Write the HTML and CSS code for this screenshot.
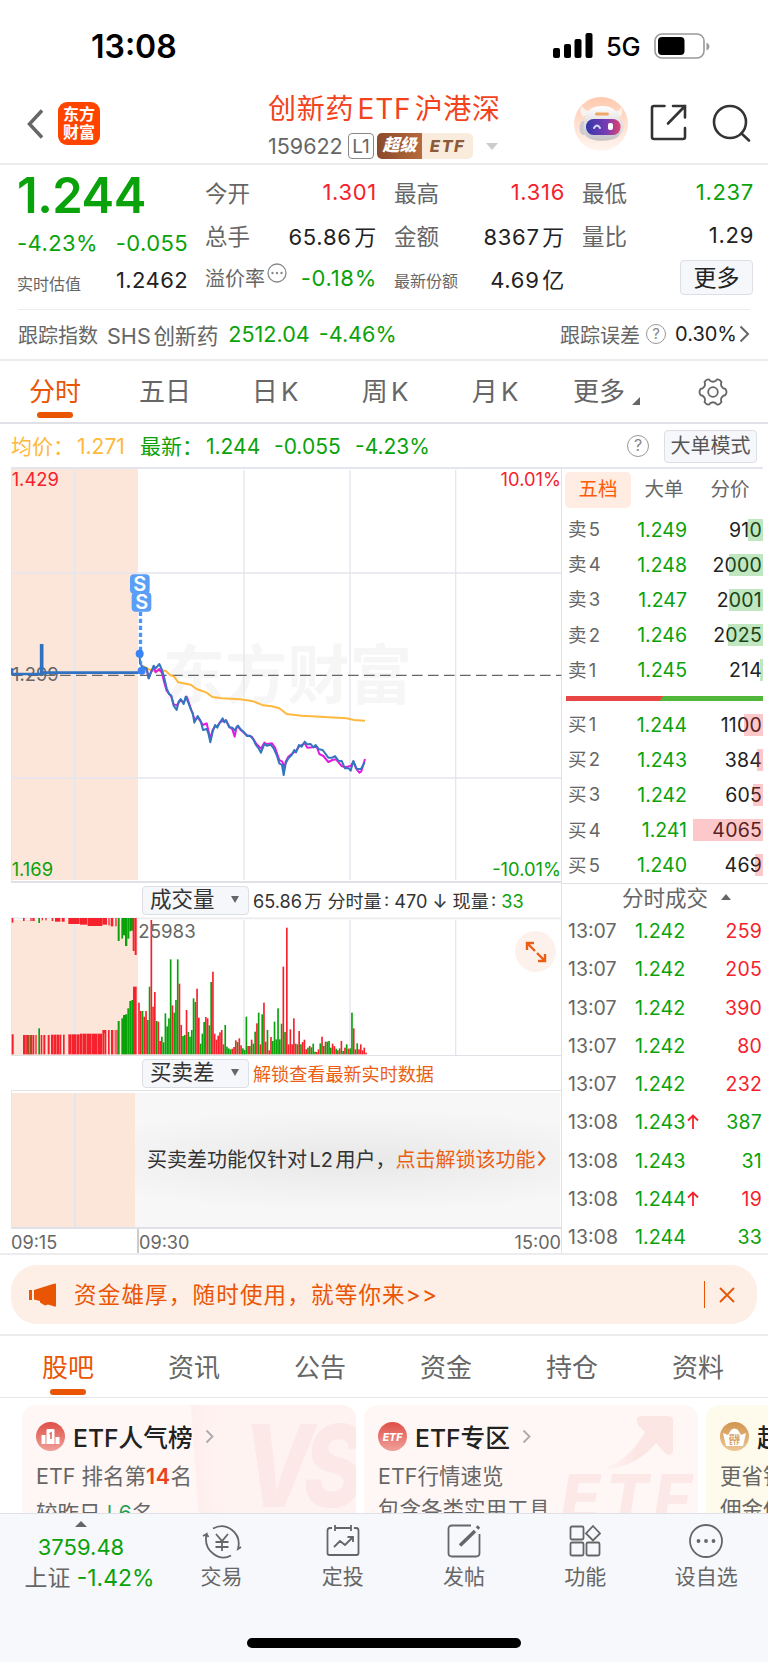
FILE: index.html
```html
<!DOCTYPE html>
<html lang="zh-CN">
<head>
  <meta charset="UTF-8" />
  <meta name="viewport" content="width=device-width, initial-scale=1.0" />
  <title>创新药ETF沪港深 159622</title>
  <link rel="stylesheet" href="styles.css">
</head>
<body>
  <div class="status-bar">
    <span class="time">13:08</span>
    <svg class="signal" width="40" height="26" viewBox="0 0 40 26">
      <rect x="0" y="15" width="7" height="10" rx="2" />
      <rect x="11" y="11" width="7" height="14" rx="2" />
      <rect x="21.5" y="6" width="7" height="19" rx="2" />
      <rect x="32.5" y="0" width="7" height="25" rx="2" />
    </svg>
    <span class="network">5G</span>
    <svg class="battery" width="56" height="26" viewBox="0 0 56 26">
      <rect x="1" y="1" width="49" height="24" rx="7" fill="none" stroke="#999" stroke-width="1.6" />
      <rect x="4" y="4" width="26.5" height="18" rx="4" />
      <path d="M52.5 9.5v8q3-1.500 3-4t-3-4z" fill="#999" />
    </svg>
  </div>

  <header class="header">
    <svg class="back" width="20" height="34" viewBox="0 0 20 34"><path d="M16 3.500L3.500 17 16 30.500" /></svg>
    <div class="logo">东方<br>财富</div>
    <div class="title">
      <h1>创新药ETF沪港深</h1>
      <div class="code">
        <span class="code-no">159622</span>
        <span class="level">L1</span>
        <span class="badge"><b>超级</b><i>ETF</i></span>
        <span class="caret"></span>
      </div>
    </div>
    <svg class="robot" width="54" height="54" viewBox="0 0 54 54">
      <defs>
        <linearGradient id="robotBg" x1="0" y1="0" x2="0" y2="1"><stop offset="0" stop-color="#ffc9ae" /><stop offset="1" stop-color="#fff6f1" /></linearGradient>
        <linearGradient id="robotFace"><stop offset="0" stop-color="#3438a8" /><stop offset=".6" stop-color="#7a3bb5" /><stop offset="1" stop-color="#e0446c" /></linearGradient>
        <linearGradient id="robotHead" x1="0" y1="0" x2="0" y2="1"><stop offset="0" stop-color="#fff" /><stop offset="1" stop-color="#c4c1c6" /></linearGradient>
      </defs>
      <circle cx="27" cy="27" r="27" fill="url(#robotBg)" />
      <path d="M9 20Q4 14 8 9q2 5 9 5zM42 14q5 0 5-5 3 5-1 11z" fill="#faf3f0" />
      <ellipse cx="9.5" cy="31" rx="4" ry="7" fill="#cfcbd0" />
      <ellipse cx="46" cy="30" rx="4" ry="7" fill="#e4dfe2" />
      <path d="M10 26Q11 9 28 9t18 17q4 14-8 16.500-11 2.500-20 0-11-3-8-16.500z" fill="url(#robotHead)" />
      <rect x="21" y="15.5" width="14" height="3" rx="1.5" fill="#f0a868" />
      <rect x="12" y="22" width="34.5" height="16" rx="7.5" fill="url(#robotFace)" />
      <path d="M20 31q3-5 6 0" fill="none" stroke="#cfe0ff" stroke-width="2" stroke-linecap="round" />
      <rect x="34" y="26" width="5" height="7" rx="2" fill="#fff" />
    </svg>
    <svg class="share" width="38" height="38" viewBox="0 0 38 38"><path d="M14.500 2H4Q2 2 2 4v29q0 2 2 2h29q2 0 2-2V24M23 2h12v11.500M35 2L18 19.500" /></svg>
    <svg class="search" width="40" height="40" viewBox="0 0 40 40"><circle cx="18" cy="18" r="16" /><path d="M29.500 29.500l7.500 7" /></svg>
  </header>

  <section class="quote">
    <div class="quote-main">
      <div class="price">1.244</div>
      <div class="line change"><span>-4.23%</span><span>-0.055</span></div>
      <div class="line"><small>实时估值</small><span>1.2462</span></div>
    </div>
    <div class="quote-grid">
      <div class="line"><label>今开</label><span class="red">1.301</span></div>
      <div class="line"><label>最高</label><span class="red">1.316</span></div>
      <div class="line"><label>最低</label><span class="green">1.237</span></div>
      <div class="line"><label>总手</label><span>65.86万</span></div>
      <div class="line"><label>金额</label><span>8367万</span></div>
      <div class="line"><label>量比</label><span>1.29</span></div>
      <div class="line premium">
        <label>溢价率</label>
        <svg width="20" height="20" viewBox="0 0 20 20"><circle cx="10" cy="10" r="9" fill="none" stroke="#888" stroke-width="1.3" /><circle cx="5.5" cy="10" r="1.2" /><circle cx="10" cy="10" r="1.2" /><circle cx="14.5" cy="10" r="1.2" /></svg>
        <span class="green">-0.18%</span>
      </div>
      <div class="line"><small>最新份额</small><span>4.69亿</span></div>
      <div class="line end"><button class="more">更多</button></div>
    </div>
  </section>

  <section class="track">
    <label>跟踪指数</label>
    <span class="track-name">SHS创新药</span>
    <span class="green">2512.04</span>
    <span class="green">-4.46%</span>
    <label class="track-err">跟踪误差</label>
    <span class="help">?</span>
    <span class="err-val">0.30%</span>
    <svg width="11" height="18" viewBox="0 0 11 18"><path d="M1.500 1.500L9 9l-7.500 7.500" /></svg>
  </section>

  <nav class="periods">
    <span class="active">分时</span>
    <span>五日</span>
    <span>日K</span>
    <span>周K</span>
    <span>月K</span>
    <span class="period-more">更多</span>
    <svg width="30" height="30" viewBox="0 0 30 30">
      <path d="M11 2.500C13 5.500 17 5.500 19 2.500Q21.500 2 23.500 5C22 8 24 11.500 27.500 12Q29.500 15 27.500 18C24 18.500 22 22 23.500 25Q21.500 28 19 27.500C17 24.500 13 24.500 11 27.500Q8.500 28 6.500 25C8 22 6 18.500 2.500 18Q.5 15 2.500 12C6 11.500 8 8 6.500 5Q8.500 2 11 2.500z" />
      <circle cx="15" cy="15" r="4.8" />
    </svg>
  </nav>

  <div class="ticker">
    <span class="yellow cjk">均价：</span><span class="yellow num1">1.271</span>
    <span class="green cjk">最新：</span><span class="green num2">1.244</span>
    <span class="green num3">-0.055</span><span class="green">-4.23%</span>
    <span class="help">?</span>
    <button class="mode">大单模式</button>
  </div>

  <main class="market">
    <div class="charts">
      <!-- chart units are thirds of a pixel -->
      <svg class="price-chart" width="551" height="412" viewBox="33 -273 1653 1236">
        <rect x="36" y="-273" width="378" height="1233" fill="#fce5d9" />
        <text x="488" y="415" class="watermark" textLength="748" lengthAdjust="spacingAndGlyphs">东方财富</text>
        <g stroke="#e3e6ee" stroke-width="4">
          <path d="M224-270V960M732-270V960M1050-270V960M1367-270V960" />
          <path d="M34 39H1684M34 654H1684M34-276V966" />
        </g>
        <path d="M36 346H1684" stroke="#666" stroke-width="4" stroke-dasharray="32 16" />
        <text x="35" y="-222" class="t-red">1.429</text>
        <text x="1683" y="-222" class="t-red" text-anchor="end">10.01%</text>
        <text x="36" y="363" class="t-gray">1.299</text>
        <text x="35" y="948" class="t-green">1.169</text>
        <text x="1683" y="948" class="t-green" text-anchor="end">-10.01%</text>
        <g fill="none" stroke-linejoin="round">
          <path d="M36 325V346M36 342H122M125 338H416" stroke="#2f72c4" stroke-width="8" />
          <path d="M125 252V345" stroke="#2f72c4" stroke-width="11" />
          <polyline stroke="#ffb83c" stroke-width="6" points="428,317 445,328 460,332 497,332 510,345 522,350 535,367 572,374 590,387 620,398 637,411 665,415 720,418 760,424 790,436 815,439 838,445 860,462 905,467 960,470 1040,475 1062,480 1095,482" />
          <polyline stroke="#e31be0" stroke-width="6" points="428,322 440,328 446,355 452,338 461,322 467,337 478,327 486,340 492,365 500,392 514,410 521,433 530,436 536,428 542,420 551,428 560,410 568,432 578,462 585,480 593,472 602,485 609,495 620,490 631,537 638,510 645,500 652,498 660,487 670,482 678,482 688,500 697,508 704,530 710,500 714,500 722,510 741,526 755,530 768,550 783,566 793,548 800,552 816,550 825,563 838,600 847,605 853,625 857,605 865,590 875,582 888,573 897,560 914,550 922,563 936,562 950,560 958,582 970,588 985,606 997,600 1008,598 1025,618 1035,622 1052,618 1060,605 1068,625 1078,638 1084,634 1095,597" />
          <polyline stroke="#3176bf" stroke-width="6" points="419,285 420,310 428,322 440,325 446,355 452,340 461,317 467,325 478,312 486,330 492,350 500,385 507,402 514,407 521,437 530,450 536,425 542,417 551,432 557,410 565,428 573,450 578,458 583,488 593,468 602,483 609,510 620,507 625,520 631,547 638,515 645,495 652,503 660,487 668,475 673,487 678,480 688,502 697,503 704,511 714,497 722,508 732,517 741,528 750,527 760,538 768,555 777,567 783,578 793,552 800,557 812,554 822,567 830,585 838,610 846,615 851,645 857,610 865,595 875,585 883,570 888,577 897,555 905,560 914,545 922,553 932,552 940,562 947,555 957,568 968,570 985,593 997,593 1005,588 1015,602 1025,603 1035,625 1046,625 1052,632 1060,603 1070,626 1083,627 1094,607" />
          <path d="M419 155V270M424 155V320" stroke="#4a93fb" stroke-width="5" stroke-dasharray="13 8" />
        </g>
        <circle cx="419" cy="281" r="12" fill="#3b82f6" />
        <circle cx="425" cy="332" r="12" fill="#3b82f6" />
        <rect x="390" y="43" width="59" height="58" rx="12" fill="#5a9ef8" />
        <text x="419" y="94" class="t-mark">S</text>
        <rect x="395" y="97" width="59" height="58" rx="12" fill="#5a9ef8" />
        <text x="425" y="148" class="t-mark">S</text>
      </svg>

      <div class="bar">
        <button class="select">成交量</button>
        <span>65.86万 分时量: 470 ↓ 现量: <em class="green">33</em></span>
      </div>

      <div class="volume">
        <svg id="volume" width="551" height="138" viewBox="33 141 1653 414">
          <rect x="36" y="150" width="378" height="405" fill="#fce5d9" />
          <path d="M33 145H1686" stroke="#ececee" stroke-width="5" />
          <g stroke="#e3e6ee" stroke-width="4">
            <path d="M224 150V555M732 150V555M1050 150V555M1367 150V555M34 141V555" />
          </g>
          <g id="bars"></g>
          <text x="415" y="203" class="t-gray t-wide">25983</text>
        </svg>
        <span class="expand">
          <svg width="22" height="22" viewBox="0 0 22 22"><path d="M9 2H2v7M2 2l8 8M20 13v7h-7M20 20l-8-8" /></svg>
        </span>
      </div>

      <div class="bar bar-diff">
        <button class="select">买卖差</button>
        <span class="orange">解锁查看最新实时数据</span>
      </div>

      <div class="locked">
        <div class="locked-pre"></div>
        <div class="locked-body">买卖差功能仅针对L2用户，<a>点击解锁该功能</a><svg width="9" height="17" viewBox="0 0 9 17"><path d="M1.500 1.500l6 7-6 7" /></svg></div>
      </div>
      <div class="axis"><span>09:15</span><span>09:30</span><span>15:00</span></div>
    </div>

    <aside class="side">
      <div class="side-tabs"><span class="active">五档</span><span>大单</span><span>分价</span></div>
      <div class="book" id="asks"></div>
      <div class="ratio"></div>
      <div class="book" id="bids"></div>
      <div class="deals-head">分时成交</div>
      <div class="deals" id="deals"></div>
    </aside>
  </main>

  <div class="banner">
    <svg width="28" height="24" viewBox="0 0 28 24"><path d="M0 7h3v10H0zM5 7L24 1q3-1 3 0v22q0 1-3 0l-5-1.500-3 1-5-3V18l-6-1.500z" /></svg>
    <span class="banner-text">资金雄厚，随时使用，就等你来&gt;&gt;</span>
    <span class="banner-sep"></span>
    <svg width="16" height="16" viewBox="0 0 16 16"><path d="M1 1l14 14M15 1L1 15" stroke="#ea5504" stroke-width="1.8" /></svg>
  </div>

  <nav class="sections">
    <span class="active">股吧</span><span>资讯</span><span>公告</span><span>资金</span><span>持仓</span><span>资料</span>
  </nav>

  <section class="cards">
    <div class="card card-rank">
      <div class="card-art vs">VS</div>
      <h2>
        <svg width="29" height="29" viewBox="0 0 29 29">
          <defs><linearGradient id="redIcon" x1="0" y1="0" x2="0" y2="1"><stop offset="0" stop-color="#de5048" /><stop offset="1" stop-color="#f0a09a" /></linearGradient></defs>
          <circle cx="14.5" cy="14.5" r="14.5" fill="url(#redIcon)" />
          <path d="M5.500 13h4v9h-4zM10.500 8q0-1 1-1h6q1 0 1 1v14h-8zM19.500 15h4v7h-4z" fill="#fff" />
          <path d="M13.500 12l1.500-1v6" fill="none" stroke="#de6058" stroke-width="1.5" />
        </svg>
        ETF人气榜
        <svg class="arrow" width="9" height="15" viewBox="0 0 9 15"><path d="M1.500 1.500l6 6-6 6" /></svg>
      </h2>
      <p>ETF 排名第<b>14</b>名</p>
      <p>较昨日<em>↓6</em>名</p>
    </div>
    <div class="card card-zone">
      <svg class="zone-arrow" width="80" height="58" viewBox="0 0 80 58">
        <defs><linearGradient id="zoneFade"><stop offset="0" stop-color="#fce6e4" stop-opacity="0" /><stop offset=".5" stop-color="#fce6e4" /></linearGradient></defs>
        <path d="M2 56Q30 48 47 18L40 11Q36 3 43 2H70Q75 2 75 6V38Q72 44 66 38L58 29Q38 54 2 56z" fill="url(#zoneFade)" />
      </svg>
      <div class="card-art etf">ETF</div>
      <h2>
        <svg width="29" height="29" viewBox="0 0 29 29"><circle cx="14.5" cy="14.5" r="14.5" fill="url(#redIcon)" /><text x="14.5" y="19" class="icon-etf">ETF</text></svg>
        ETF专区
        <svg class="arrow" width="9" height="15" viewBox="0 0 9 15"><path d="M1.500 1.500l6 6-6 6" /></svg>
      </h2>
      <p>ETF行情速览</p>
      <p>包含各类实用工具</p>
    </div>
    <div class="card card-super">
      <h2>
        <svg width="29" height="29" viewBox="0 0 29 29">
          <defs><linearGradient id="goldIcon" x1="0" y1="0" x2="0" y2="1"><stop offset="0" stop-color="#d09550" /><stop offset="1" stop-color="#edc795" /></linearGradient></defs>
          <circle cx="14.5" cy="14.5" r="14.5" fill="url(#goldIcon)" />
          <path d="M3 11l5 2 3-5q3.500-3 7 0l3 5 5-2-3 13H6z" fill="#fff" />
          <text x="14.5" y="17" class="icon-super">超级</text>
          <text x="14.5" y="22.5" class="icon-super">ETF</text>
        </svg>
        超级
      </h2>
      <p>更省钱</p>
      <p>佣金低</p>
    </div>
  </section>

  <footer class="toolbar">
    <div class="index">
      <span class="up"></span>
      <div class="green">3759.48</div>
      <div class="index-name">上证 <span class="green">-1.42%</span></div>
    </div>
    <div class="tool">
      <svg width="40" height="36" viewBox="0 0 40 36"><path d="M11 4.500Q21-1 30 6t6 19l3-2M29 31.500q-9 5-18-2T4.500 10L1 12M4.500 10l2 3M14 10l6 7 6-7M20 17v10M13.500 18h13M13.500 23h13" /></svg>
      <span>交易</span>
    </div>
    <div class="tool">
      <svg width="34" height="36" viewBox="0 0 34 36"><path d="M6 4H4Q1.500 4 1.500 6.500V29q0 2 2 2h27q2 0 2-2V6.500Q32.500 4 30 4h-2M9 4h16M9 1v6M25 1v6M8 23l6-6 5 4 8-8M21.500 13H27v5" /></svg>
      <span>定投</span>
    </div>
    <div class="tool">
      <svg width="34" height="36" viewBox="0 0 34 36"><path d="M24 1.500H5Q1.500 1.500 1.500 5v24q0 3.500 3.500 3.500h24q3.500 0 3.500-3.500V10" /><path d="M13 21.500L28 7" stroke-width="3.5" /><path d="M30 4.500l2-2" stroke-width="3.5" /></svg>
      <span>发帖</span>
    </div>
    <div class="tool">
      <svg width="32" height="36" viewBox="0 0 32 36"><rect x="1.5" y="2.5" width="13" height="13" rx="1.5" /><rect x="1.5" y="18.5" width="13" height="13" rx="1.5" /><rect x="17.5" y="18.5" width="13" height="13" rx="1.5" /><path d="M24 2l7 7.500-7 7-7-7z" /></svg>
      <span>功能</span>
    </div>
    <div class="tool">
      <svg width="36" height="36" viewBox="0 0 36 36"><circle cx="18" cy="17" r="16" /><path d="M10.500 17h.01M18 17h.01M25.500 17h.01" stroke-width="3.8" stroke-linecap="round" /></svg>
      <span>设自选</span>
    </div>
    <div class="home-bar"></div>
  </footer>

  <script src="script.js"></script>
</body>
</html>
```
FILE: styles.css
```css
* {
  box-sizing: border-box;
}
body {
  margin: 0;
  width: 768px;
  height: 1662px;
  overflow: hidden;
  background: #fff;
  color: #222;
  font-family: Inter, "Noto Sans CJK SC", sans-serif;
  text-autospace: normal;
  display: flex;
  flex-direction: column;
}
h1, h2, p {
  margin: 0;
  font-weight: 400;
}
svg {
  display: block;
  flex: none;
}
button {
  font-family: inherit;
  border: 1px solid #dcdfe6;
  border-radius: 4px;
  background: #f6f7fb;
  color: #333;
  padding: 0;
}
.red { color: #f5222d; }
.green { color: #0aa20a; }
.yellow { color: #ffb83c; }
.orange { color: #ea5f14; }
em { font-style: normal; }

/* status bar */
.status-bar {
  height: 82px;
  flex: none;
  display: flex;
  align-items: center;
  padding: 10px 0 0 91px;
}
.time {
  font-size: 32px;
  font-weight: 600;
  color: #000;
  width: 462px;
}
.network {
  font-size: 25.5px;
  font-weight: 500;
  color: #000;
  width: 48px;
  margin-left: 13px;
  letter-spacing: -0.3px;
}

/* header */
.header {
  height: 83px;
  flex: none;
  display: flex;
  padding-left: 26px;
  border-bottom: 2px solid #ececee;
}
.back {
  margin-top: 25px;
  fill: none;
  stroke: #666;
  stroke-width: 3.5;
}
.logo {
  width: 42px;
  height: 43px;
  margin: 20px 0 0 12px;
  padding-top: 4px;
  border-radius: 9px;
  background: #ff4400;
  color: #fff;
  font-size: 16px;
  line-height: 17.5px;
  font-weight: 700;
  text-align: center;
}
.title {
  width: 306px;
  margin-left: 168px;
}
.title h1 {
  font-size: 28px;
  line-height: 40px;
  margin-top: 7px;
  color: #f2431d;
  letter-spacing: 0.7px;
  white-space: nowrap;
}
.code {
  display: flex;
  align-items: center;
  height: 26px;
  margin-top: 4px;
}
.code-no {
  width: 80px;
  font-size: 21.5px;
  color: #666;
}
.level {
  width: 26px;
  height: 26px;
  border: 1px solid #888;
  border-radius: 4px;
  font-size: 19px;
  line-height: 25px;
  text-align: center;
  color: #666;
}
.badge {
  display: flex;
  margin-left: 3px;
  width: 96px;
  height: 26px;
  border-radius: 5px;
  overflow: hidden;
  line-height: 26px;
  text-align: center;
}
.badge b {
  width: 45px;
  background: linear-gradient(90deg, #8a4a2a, #b76a3d);
  color: #fff;
  font-size: 17px;
  line-height: 24px;
  font-weight: 900;
  font-style: italic;
}
.badge i {
  flex: 1;
  background: #faecdc;
  color: #8c5a3c;
  font-size: 16.5px;
  font-weight: 800;
  letter-spacing: 1.5px;
}
.caret {
  margin-left: 13px;
  border: 6px solid transparent;
  border-top: 7px solid #ccc;
  border-bottom: 0;
}
.robot { margin-top: 15px; }
.share {
  margin: 22px 0 0 22px;
}
.search {
  margin: 22px 0 0 24px;
}
.share, .search {
  fill: none;
  stroke: #333;
  stroke-width: 2.6;
  stroke-linecap: round;
}

/* quote */
.quote {
  height: 144px;
  flex: none;
  display: flex;
  padding: 5px 14px 0 17px;
}
.quote-main {
  width: 171px;
}
.quote-grid {
  flex: 1;
  margin-left: 17px;
  display: grid;
  grid-template-columns: 172px 171px 172px;
  grid-template-rows: 43px 43px 43px;
  column-gap: 17px;
}
.price {
  height: 50px;
  line-height: 51px;
  font-size: 49px;
  font-weight: 600;
  color: #0aa20a;
  letter-spacing: -0.5px;
}
.line {
  display: flex;
  align-items: center;
  justify-content: space-between;
  height: 43px;
  font-size: 22px;
  letter-spacing: 0.7px;
  white-space: nowrap;
}
.quote-main .line {
  height: 28px;
  letter-spacing: 0.4px;
}
.quote-main .change {
  height: 46px;
  color: #0aa20a;
}
.line label {
  color: #666;
  font-size: 22.5px;
  letter-spacing: 0;
}
.line small {
  font-size: 16px;
  letter-spacing: 0;
  color: #666;
  padding-top: 5px;
}
.premium label {
  font-size: 20px;
}
.premium svg {
  margin: -9px auto 0 2px;
  fill: #888;
}
.line.end {
  justify-content: flex-end;
}
.more {
  width: 73px;
  height: 35px;
  font-size: 23px;
  line-height: 30px;
  margin: 0 1px 0 0;
  color: #222;
}

/* tracked index */
.track {
  height: 50px;
  flex: none;
  margin: 0 18px;
  padding-bottom: 1px;
  border-top: 1px solid #ececee;
  display: flex;
  align-items: center;
  font-size: 21.6px;
  white-space: nowrap;
}
.track label, .track-name { color: #666; }
.track label { font-size: 20px; }
.track-name { margin: 0 10px 0 9px; }
.track .green { margin-right: 9px; }
.track .track-err { margin-left: auto; }
.track .help { margin: 0 9px 0 6px; width: 20px; height: 20px; font-size: 15px; line-height: 18px; }
.track .err-val { font-size: 20px; }
.track svg { margin-left: 2px; fill: none; stroke: #666; stroke-width: 2; }
.help {
  width: 22px;
  height: 22px;
  border: 1.5px solid #999;
  border-radius: 50%;
  font-size: 16px;
  line-height: 19px;
  text-align: center;
  color: #888;
}

/* period tabs */
.periods {
  height: 65px;
  flex: none;
  display: flex;
  align-items: center;
  border-top: 2px solid #ececee;
  border-bottom: 2px solid #dfe1e7;
  font-size: 26px;
  color: #666;
}
.periods span {
  width: 110px;
  text-align: center;
  position: relative;
  padding-bottom: 4px;
}
.periods .active, .sections .active {
  color: #ea5504;
}
.periods .active::after, .sections .active::after {
  content: "";
  position: absolute;
  left: 50%;
  bottom: -6px;
  width: 36px;
  height: 6px;
  margin-left: -18px;
  border-radius: 3px;
  background: #ea5504;
}
.periods .period-more::after {
  content: "";
  position: absolute;
  right: 8px;
  bottom: 7px;
  border-left: 8px solid transparent;
  border-bottom: 8px solid #666;
}
.periods .period-more {
  width: 98px;
  margin-right: 50px;
}
.periods svg {
  fill: none;
  stroke: #666;
  stroke-width: 1.8;
  stroke-linejoin: round;
}

/* ticker line */
.ticker {
  height: 43px;
  flex: none;
  display: flex;
  align-items: center;
  padding: 1px 11px 0;
  font-size: 21px;
  white-space: nowrap;
}
.ticker .num1 { width: 63px; }
.ticker .num2 { width: 68px; }
.ticker .num3 { width: 81px; }
.ticker .cjk { width: 66px; padding-bottom: 3px; }
.ticker .help { margin: 0 15px 0 auto; }
.mode {
  width: 93px;
  height: 33px;
  font-size: 20px;
  line-height: 29px;
  color: #555;
}

/* market area */
.market {
  height: 788px;
  flex: none;
  display: flex;
  padding-left: 11px;
  border-bottom: 2px solid #ececee;
}
.charts {
  width: 551px;
  flex: none;
  border-top: 2px solid #e3e6ee;
  border-right: 1px solid #dfe1e7;
}
.charts text {
  font-size: 55px;
}
.t-red { fill: #f5222d; }
.t-green { fill: #0aa20a; }
.t-gray { fill: #666; }
.charts .t-wide { font-size: 56px; }
.charts .t-mark { fill: #fff; font-size: 60px; font-weight: 600; text-anchor: middle; }
.charts .watermark { fill: #f6f6f6; font-size: 192px; font-weight: 700; }
.bar {
  height: 36px;
  display: flex;
  align-items: center;
  padding-left: 131px;
  border-top: 2px solid #dfe1e7;
  font-size: 18.1px;
  white-space: nowrap;
  color: #333;
}
.bar span {
  padding-bottom: 1px;
}
.bar-diff {
  border-width: 1px;
  border-bottom: 1px solid #dfe1e7;
}
.select {
  width: 107px;
  height: 29px;
  font-size: 21.5px;
  line-height: 24px;
  margin-right: 4px;
  padding: 0 9px 2px 7px;
  display: flex;
  justify-content: space-between;
  align-items: center;
}
.select::after {
  content: "";
  border: 4px solid transparent;
  border-top: 7px solid #666;
  border-bottom: 0;
}
.volume {
  position: relative;
}
.expand {
  position: absolute;
  right: 5px;
  top: 14px;
  width: 41px;
  height: 41px;
  border-radius: 50%;
  background: #fdf1eb;
  display: flex;
  align-items: center;
  justify-content: center;
}
.expand svg {
  fill: none;
  stroke: #ea5f14;
  stroke-width: 2.4;
}
.locked {
  height: 138px;
  display: flex;
  padding-top: 2px;
  border-left: 1px solid #e3e6ee;
  border-bottom: 2px solid #dfe1e7;
}
.locked-pre {
  width: 123px;
  background: linear-gradient(90deg, transparent 62px, #e3e6ee 62px, #e3e6ee 63.5px, transparent 63.5px) #fce5d9;
}
.locked-body {
  flex: 1;
  display: flex;
  align-items: center;
  padding: 0 0 4px 12px;
  margin-right: 1px;
  font-size: 20px;
  white-space: nowrap;
  color: #333;
  background: radial-gradient(ellipse 75% 38% at 52% 50%, #e8e8e8, transparent) #f7f7f8;
}
.locked-body a { color: #ea5f14; }
.locked-body svg { fill: none; stroke: #ea5f14; stroke-width: 2; margin-left: 1px; }
.axis {
  height: 24px;
  display: flex;
  font-size: 18.1px;
  line-height: 26px;
  color: #666;
}
.axis span:first-child { width: 126px; }
.axis span:nth-child(2) { border-left: 2px solid #ccc; }
.axis span:last-child { margin-left: auto; }

/* order book */
.side {
  flex: 1;
  min-width: 0;
  font-size: 19.5px;
}
.side-tabs {
  display: flex;
  margin-right: 5px;
  height: 45px;
  border-top: 2px solid #e3e6ee;
  padding: 3px 0 4px 3px;
  color: #666;
}
.side-tabs span {
  width: 66px;
  height: 36px;
  line-height: 35px;
  text-align: center;
}
.side-tabs .active {
  background: #ffece3;
  color: #ff5c0a;
  border-radius: 5px;
}
.row {
  display: flex;
  align-items: center;
  height: 35.2px;
  padding: 0 6px;
}
.row .name { color: #666; width: 56px; font-size: 18.5px; }
.book .name { padding-bottom: 3px; }
.row .val { color: #0aa20a; width: 63px; text-align: right; }
.row .qty {
  position: relative;
  flex: 1;
  text-align: right;
  letter-spacing: 0.2px;
}
.row .qty i {
  position: absolute;
  right: -1px;
  top: 50%;
  height: 22px;
  margin-top: -11px;
  background: rgba(10, 162, 10, 0.26);
}
#bids .qty i { background: rgba(245, 34, 45, 0.25); }
.ratio {
  height: 5px;
  margin: 8px 5px 6px 4px;
  background: linear-gradient(125deg, #e84545 48.5%, #52b83c 48.5%);
}
.deals-head {
  height: 29px;
  border-top: 1px solid #dfe1e7;
  display: flex;
  align-items: center;
  padding: 0 0 2px 60px;
  font-size: 21.5px;
  color: #666;
}
.deals-head::after {
  content: "";
  margin-left: 13px;
  border: 5px solid transparent;
  border-bottom: 6px solid #666;
  border-top: 0;
}
.deals .row { height: 38.25px; }
.deals .name { width: 56px; font-size: 19.5px; }
.deals .val { width: 75px; text-align: left; padding-left: 11px; white-space: nowrap; font-size: 19.8px; }
.deals svg { display: inline-block; margin-left: 1px; }

/* banner */
.banner {
  height: 59px;
  flex: none;
  margin: 10px 11px;
  padding: 0 22px 0 18px;
  border-radius: 26px;
  background: #fdeee6;
  display: flex;
  align-items: center;
  fill: #ea5504;
}
.banner-text {
  margin-left: 17px;
  padding-bottom: 3px;
  font-size: 22.5px;
  letter-spacing: 1.2px;
  color: #ea5504;
}
.banner-sep {
  width: 1.5px;
  height: 27px;
  margin: 0 14px 0 auto;
  background: #ea5504;
}

/* content tabs */
.sections {
  height: 64px;
  flex: none;
  display: flex;
  align-items: center;
  padding-left: 5px;
  border-top: 2px solid #ececee;
  border-bottom: 1px solid #e6e6e8;
  font-size: 26px;
  color: #666;
}
.sections span {
  width: 126px;
  text-align: center;
  position: relative;
  padding-bottom: 3px;
}
.sections .active::after {
  bottom: -8px;
}

/* cards */
.cards {
  height: 115px;
  flex: none;
  overflow: hidden;
  display: flex;
  gap: 8px;
  padding: 7px 0 0 22px;
  text-autospace: no-autospace;
}
.card {
  position: relative;
  width: 334px;
  height: 170px;
  flex: none;
  padding: 12px 14px;
  border-radius: 14px;
  overflow: hidden;
  background: #fff7f5;
}
.card-rank { background: linear-gradient(86deg, #fff7f5 52%, #feefed 52.5%, #fff3f1 61%, #fff3f1); }
.card-super { background: #fffbec; }
.card h2 {
  position: relative;
  display: flex;
  align-items: center;
  height: 38px;
  gap: 8px;
  font-size: 24.7px;
  font-weight: 500;
  white-space: nowrap;
}
.card .arrow { margin-left: 4px; fill: none; stroke: #aaa; stroke-width: 1.8; }
.card p {
  position: relative;
  font-size: 21.5px;
  line-height: 33px;
  margin-top: 5px;
  color: #666;
  white-space: nowrap;
}
.card p + p { margin-top: 0; }
.card-rank p + p { margin-top: 4px; }
.card p b { color: #e8441b; font-weight: 600; letter-spacing: 0.5px; }
.card p em { color: #1fa05a; }
.card-art {
  position: absolute;
  color: #fce8e6;
  font-weight: 800;
  font-style: italic;
  line-height: 1;
}
.vs {
  right: 2px;
  top: 4px;
  font-size: 114px;
  letter-spacing: -12px;
  transform: scaleX(0.8);
  transform-origin: right;
}
.etf {
  right: 2px;
  top: 61px;
  font-size: 64px;
  letter-spacing: 5px;
}
.zone-arrow {
  position: absolute;
  right: 20px;
  top: 9px;
}
.icon-etf { fill: #fff; font-size: 10.5px; font-weight: 800; font-style: italic; text-anchor: middle; }
.icon-super { fill: #d09550; font-size: 5.5px; font-weight: 700; text-anchor: middle; }

/* bottom toolbar */
.toolbar {
  position: relative;
  height: 149px;
  flex: none;
  display: flex;
  padding-left: 1px;
  border-top: 1px solid #dfe1e7;
  background: #f7f8fb;
  color: #666;
}
.index {
  width: 160px;
  display: flex;
  flex-direction: column;
  align-items: center;
  font-size: 22px;
  line-height: 31px;
  white-space: nowrap;
}
.index-name {
  padding-left: 17px;
  font-size: 22.9px;
}
.up {
  margin: 7px 0 5px;
  border: 6px solid transparent;
  border-bottom: 6px solid #666;
  border-top: 0;
}
.tool {
  width: 121.2px;
  padding-top: 10px;
  display: flex;
  flex-direction: column;
  align-items: center;
  font-size: 21px;
  line-height: 30px;
}
.tool span { margin-top: 2px; }
.tool svg {
  fill: none;
  stroke: #666;
  stroke-width: 1.8;
}
.home-bar {
  position: absolute;
  left: 247px;
  top: 124px;
  width: 274px;
  height: 10px;
  border-radius: 5px;
  background: #000;
}
```
FILE: script.js
```js
const RED = '#f5222d';
const GREEN = '#0aa20a';

// price, quantity, depth bar width
const asks = [[5, '1.249', 910, 15], [4, '1.248', 2000, 34], [3, '1.247', 2001, 34], [2, '1.246', 2025, 35], [1, '1.245', 214, 3]];
const bids = [[1, '1.244', 1100, 19], [2, '1.243', 384, 6], [3, '1.242', 605, 10], [4, '1.241', 4065, 70], [5, '1.240', 469, 8]];

function renderBook(id, side, rows) {
  document.getElementById(id).innerHTML = rows.map(([n, price, qty, w]) => `
    <div class="row">
      <span class="name">${side}${n}</span>
      <span class="val">${price}</span>
      <span class="qty"><i style="width:${w}px"></i>${qty}</span>
    </div>`).join('');
}
renderBook('asks', '卖', asks);
renderBook('bids', '买', bids);

const deals = [
  ['13:07', '1.242', 259, 'red'], ['13:07', '1.242', 205, 'red'], ['13:07', '1.242', 390, 'red'],
  ['13:07', '1.242', 80, 'red'], ['13:07', '1.242', 232, 'red'], ['13:08', '1.243', 387, 'green', true],
  ['13:08', '1.243', 31, 'green'], ['13:08', '1.244', 19, 'red', true], ['13:08', '1.244', 33, 'green'],
];
const upArrow = '<svg width="12" height="15" viewBox="0 0 12 15"><path d="M6 15V1.500M1 6.500l5-5 5 5" fill="none" stroke="#f5222d" stroke-width="1.8"/></svg>';
document.getElementById('deals').innerHTML = deals.map(([t, price, qty, cls, up]) => `
  <div class="row">
    <span class="name">${t}</span>
    <span class="val">${price}${up ? upArrow : ''}</span>
    <span class="qty ${cls}">${qty}</span>
  </div>`).join('');

// one entry per minute since 09:30
const minutes = '155r 130r 130g 113r 130r 103g 203g 403r 143r 187r 100g 98r 40r 53g 36g 123g 84g 108g 285g 147r 125g 163g 285g 212r 88r 55g 58g 133r 67g 53g 73g 168g 157g 197r 110r 32g 62g 97g 112r 108r 87g 217g 248r 62r 44r 56r 66r 73r 30r 88g 23g 18g 15g 17r 22r 42r 37g 48r 27r 18g 13g 113g 25r 25g 44r 32g 68g 93r 125g 30r 120g 155r 38r 73g 12r 52r 40g 98g 45g 138g 45g 92g 263r 67g 380r 30r 75r 30r 108r 32r 30g 70r 30g 37r 44r 15r 20g 25r 21g 32g 8g 7r 15r 33g 53r 25g 38r 38g 40g 20g 32r 25r 17g 12r 18g 40r 10g 20r 30g 17r 18g 125g 78r 15r 33g 15r 30r 12r 20r 5r'.split(' ');

// auction blocks: x, width, height, colour
const matched = [[35, 6, 60], [69, 34, 58], [86, 5, 58, 1], [106, 4, 58], [115, 5, 78, 1], [122, 5, 58], [130, 6, 58], [143, 6, 58], [153, 31, 59], [189, 5, 59], [205, 34, 60], [240, 66, 62], [307, 12, 73], [324, 5, 73], [333, 7, 73], [344, 3, 73], [349, 4, 73], [353, 6, 100, 1], [364, 5, 108, 1], [369, 6, 118, 1], [375, 7, 120, 1], [382, 6, 138, 1], [388, 6, 160, 1], [394, 5, 163, 1], [399, 11, 203]];
const unmatched = [[35, 5, 14], [69, 5, 9], [91, 4, 9], [97, 7, 9], [115, 5, 15, 1], [125, 4, 7], [136, 4, 7], [155, 5, 9], [165, 16, 11], [185, 9, 11], [205, 34, 18], [240, 22, 20], [263, 44, 24], [307, 14, 20], [325, 4, 22], [332, 8, 25], [346, 4, 25], [353, 6, 69, 1], [364, 5, 62, 1], [369, 6, 52, 1], [375, 7, 84, 1], [382, 6, 62, 1], [388, 5, 40, 1], [393, 6, 38, 1], [398, 6, 99], [404, 6, 111]];

const rect = (x, y, w, h, green) => `<rect x="${x}" y="${y}" width="${w}" height="${h}" fill="${green ? GREEN : RED}"/>`;
let bars = '';
matched.forEach(([x, w, h, g]) => { bars += rect(x, 553 - h, w, h, g); });
unmatched.forEach(([x, w, h, g]) => { bars += rect(x, 144, w, h, g); });
minutes.forEach((m, i) => {
  const h = parseInt(m);
  bars += rect((414.5 + i * 5.28).toFixed(1), 553 - h, 5, h, m.endsWith('g'));
});
// thin gaps between auction ticks
[77, 88, 97, 160, 168, 177, 213, 228, 247, 259, 274, 291, 312].forEach(x => {
  bars += `<rect x="${x}" y="490" width="1.5" height="63" fill="#fce5d9" opacity=".7"/>`;
});
document.getElementById('bars').innerHTML = bars;
```
